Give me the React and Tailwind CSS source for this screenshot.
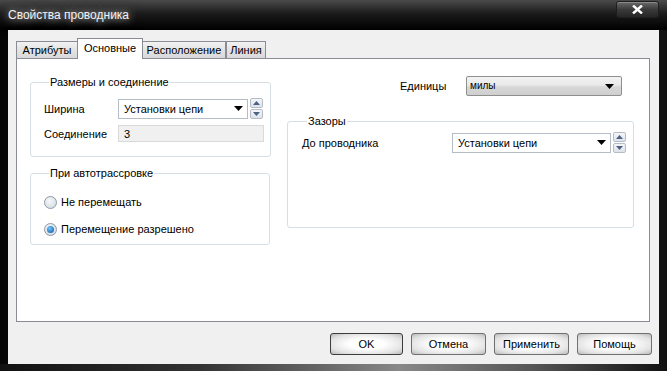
import React from 'react';

const Spinner = () => (
  <div className="flex flex-col gap-[1px] ml-[2px]">
    {['up', 'down'].map(dir => (
      <div key={dir} className="w-[13px] h-[10px] border border-[#b5bcc7] rounded-[2px] bg-[linear-gradient(#f4f6f8,#dde3ea)] flex items-center justify-center">
        <svg width="7" height="4" viewBox="0 0 7 4">
          {dir === 'up' ? <path d="M0 4 L3.5 0 L7 4 Z" fill="#4d6185" /> : <path d="M0 0 L3.5 4 L7 0 Z" fill="#4d6185" />}
        </svg>
      </div>
    ))}
  </div>
);

const Arrow = () => (
  <svg width="9" height="5" viewBox="0 0 9 5" className="shrink-0">
    <path d="M0 0 L9 0 L4.5 5 Z" fill="#000" />
  </svg>
);

const Select = ({ value, width }) => (
  <div className="flex items-center">
    <div className={`${width} h-[20px] bg-white border border-[#b4bcc6] flex items-center justify-between pl-[5px] pr-[4px]`}>
      <span>{value}</span>
      <Arrow />
    </div>
    <Spinner />
  </div>
);

const Radio = ({ checked, label }) => (
  <label className="flex items-center gap-[4px] h-[14px]">
    <span className="w-[13px] h-[13px] rounded-full border border-[#8b99a9] bg-[radial-gradient(circle_at_40%_35%,#f6f8fa,#cdd6de)] flex items-center justify-center">
      {checked && <span className="w-[7px] h-[7px] rounded-full bg-[radial-gradient(circle_at_40%_35%,#6fc8ff,#0b4f9c)]" />}
    </span>
    <span>{label}</span>
  </label>
);

const Group = ({ title, className, children }) => (
  <fieldset className={`border border-[#d5dfe5] rounded-[3px] ${className}`}>
    <legend className="ml-[5px] px-[1px] leading-[14px]">{title}</legend>
    {children}
  </fieldset>
);

const Button = ({ children, primary, width }) => (
  <button
    className={`${width} h-[22px] rounded-[3px] border ${primary ? 'border-[#3c3c3c]' : 'border-[#707070]'} bg-[radial-gradient(ellipse_at_center,#ffffff_35%,#e2e2e2_75%,#b9b9b9_100%)] text-black`}
  >
    {children}
  </button>
);

const tabs = ['Атрибуты', 'Основные', 'Расположение', 'Линия'];

export default function App() {
  return (
    <div
      className="w-[667px] h-[371px] flex flex-col bg-[linear-gradient(90deg,#050505,#1a1a1a_30%,#0a0a0a_60%,#2a2a2a_85%,#111)] text-[11px] leading-[14px] text-black overflow-hidden"
      style={{ fontFamily: '"Liberation Sans", Arial, sans-serif' }}
    >
      {/* title bar */}
      <div className="h-[30px] flex items-start justify-between pl-[8px] pr-[8px] bg-[linear-gradient(#4a4a4a,#1b1b1b_45%,#000_100%)]">
        <span className="mt-[8px] text-[12px] text-[#f2f2f2] [text-shadow:0_0_6px_#aaa,0_0_12px_#777,0_0_16px_#666]">
          Свойства проводника
        </span>
        <div className="mt-[1px] w-[43px] h-[17px] rounded-[3px] border border-[#1e1e1e] bg-[linear-gradient(#6a6a6a,#3a3a3a_50%,#262626)] shadow-[inset_0_1px_0_#8a8a8a] flex items-center justify-center">
          <svg width="11" height="9" viewBox="0 0 11 9">
            <path d="M1 0.5 L10 8.5 M10 0.5 L1 8.5" stroke="#fff" strokeWidth="2.4" />
          </svg>
        </div>
      </div>

      {/* client */}
      <div className="mx-[8px] h-[334px] bg-[#f0f0f0] flex flex-col pt-[8px] pl-[8px] pr-[9px]">
        {/* tabs */}
        <div className="flex items-end h-[20px] relative z-10">
          {tabs.map((t, i) => {
            const active = i === 1;
            const widths = ['w-[62px]', 'w-[66px]', 'w-[84px]', 'w-[40px]'];
            return active ? (
              <div key={t} className={`${widths[i]} h-[21px] -mb-[1px] bg-white border border-b-0 border-[#898c95] flex items-center justify-center pb-[2px] -mx-[1px]`}>
                {t}
              </div>
            ) : (
              <div key={t} className={`${widths[i]} h-[17px] bg-[linear-gradient(#f2f2f2,#e3e3e3_50%,#d9d9d9)] border border-b-0 border-[#898c95] flex items-center justify-center`}>
                {t}
              </div>
            );
          })}
        </div>

        {/* panel */}
        <div className="h-[264px] bg-white border border-[#898c95] flex gap-[17px] pl-[13px] pt-[16px]">
          <div className="w-[240px] flex flex-col gap-[9px]">
            <Group title="Размеры и соединение" className="h-[82px] pl-[13px] pr-[6px]">
              <div className="flex items-center mt-[9px]">
                <span className="w-[74px]">Ширина</span>
                <Select value="Установки цепи" width="w-[130px]" />
              </div>
              <div className="flex items-center mt-[6px]">
                <span className="w-[74px]">Соединение</span>
                <div className="w-[146px] h-[17px] bg-[#f0f0f0] border border-[#d9d9d9] pl-[5px] flex items-center">3</div>
              </div>
            </Group>
            <Group title="При автотрассровке" className="h-[79px] pl-[13px]">
              <div className="flex flex-col gap-[13px] mt-[15px]">
                <Radio label="Не перемещать" />
                <Radio checked label="Перемещение разрешено" />
              </div>
            </Group>
          </div>

          <div className="w-[347px] flex flex-col">
            <div className="flex items-center pl-[113px] mt-[1px] h-[20px]">
              <span className="w-[66px]">Единицы</span>
              <div className="w-[156px] h-[20px] rounded-[2px] border border-[#8e8f8f] bg-[linear-gradient(#f3f3f3,#e9e9e9_45%,#d7d7d7_55%,#cfcfcf)] flex items-center justify-between pl-[3px] pr-[7px]">
                <span className="text-[10px]">милы</span>
                <Arrow />
              </div>
            </div>
            <Group title="Зазоры" className="mt-[18px] h-[114px] pl-[14px]">
              <div className="flex items-center mt-[4px]">
                <span className="w-[150px]">До проводника</span>
                <Select value="Установки цепи" width="w-[159px]" />
              </div>
            </Group>
          </div>
        </div>

        {/* buttons */}
        <div className="flex justify-end gap-[8px] mt-[11px] -mr-[2px]">
          <Button primary width="w-[73px]">OK</Button>
          <Button width="w-[75px]">Отмена</Button>
          <Button width="w-[75px]">Применить</Button>
          <Button width="w-[75px]">Помощь</Button>
        </div>
      </div>
      <div className="flex-1 bg-[linear-gradient(90deg,#111,#333_30%,#888_60%,#555_80%,#111)]" />
    </div>
  );
}
